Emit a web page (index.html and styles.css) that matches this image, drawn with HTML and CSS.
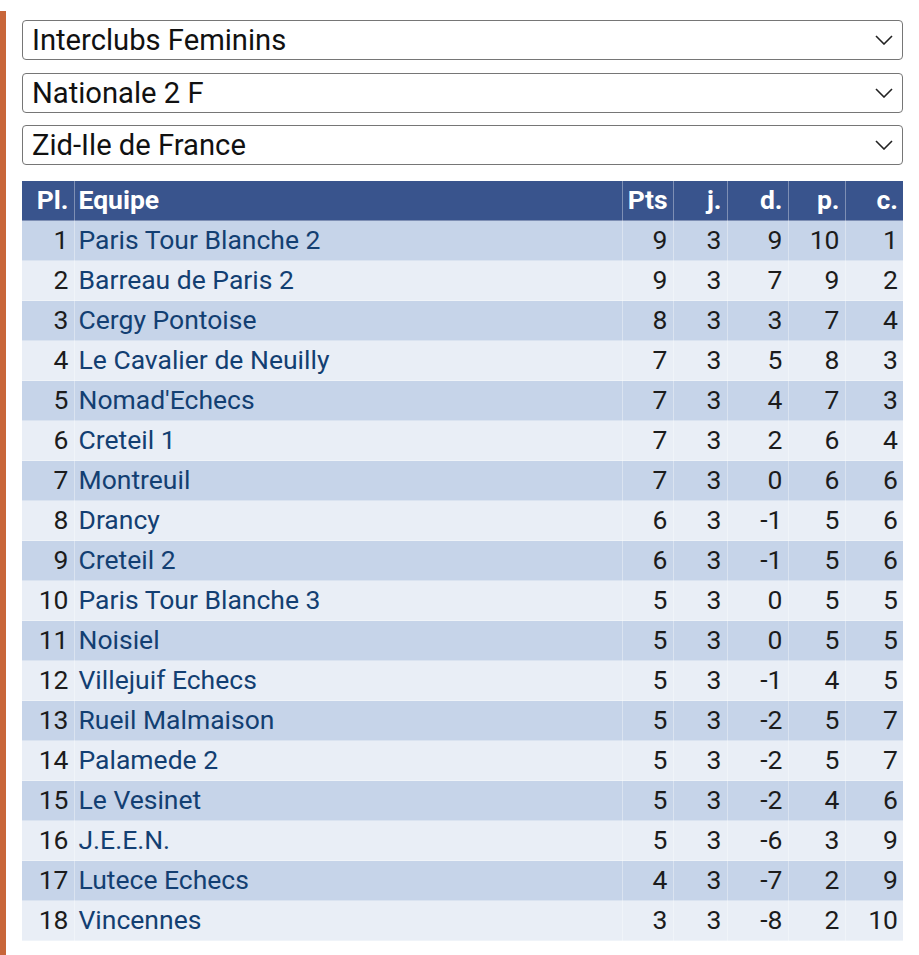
FILE: index.html
```html
<!DOCTYPE html>
<html lang="fr">
<head>
<meta charset="utf-8">
<title>Classement</title>
<link rel="stylesheet" href="styles.css">
</head>
<body>
<div class="page">
  <div class="selects">
    <div class="select-wrap">
      <select class="sel"><option>Interclubs Feminins</option></select>
      <svg class="chev" width="18" height="10" viewBox="0 0 18 10"><path d="M1 1 L9 9 L17 1" fill="none" stroke="#222" stroke-width="1.6"/></svg>
    </div>
    <div class="select-wrap">
      <select class="sel"><option>Nationale 2 F</option></select>
      <svg class="chev" width="18" height="10" viewBox="0 0 18 10"><path d="M1 1 L9 9 L17 1" fill="none" stroke="#222" stroke-width="1.6"/></svg>
    </div>
    <div class="select-wrap">
      <select class="sel"><option>Zid-Ile de France</option></select>
      <svg class="chev" width="18" height="10" viewBox="0 0 18 10"><path d="M1 1 L9 9 L17 1" fill="none" stroke="#222" stroke-width="1.6"/></svg>
    </div>
  </div>
  <table class="standings">
    <colgroup>
      <col class="c-pl"><col class="c-team"><col class="c-pts"><col class="c-j"><col class="c-d"><col class="c-p"><col class="c-c">
    </colgroup>
    <thead>
      <tr><th>Pl.</th><th class="left">Equipe</th><th>Pts</th><th>j.</th><th>d.</th><th>p.</th><th>c.</th></tr>
    </thead>
    <tbody>
      <tr><td>1</td><td class="team">Paris Tour Blanche 2</td><td>9</td><td>3</td><td>9</td><td>10</td><td>1</td></tr>
      <tr><td>2</td><td class="team">Barreau de Paris 2</td><td>9</td><td>3</td><td>7</td><td>9</td><td>2</td></tr>
      <tr><td>3</td><td class="team">Cergy Pontoise</td><td>8</td><td>3</td><td>3</td><td>7</td><td>4</td></tr>
      <tr><td>4</td><td class="team">Le Cavalier de Neuilly</td><td>7</td><td>3</td><td>5</td><td>8</td><td>3</td></tr>
      <tr><td>5</td><td class="team">Nomad'Echecs</td><td>7</td><td>3</td><td>4</td><td>7</td><td>3</td></tr>
      <tr><td>6</td><td class="team">Creteil 1</td><td>7</td><td>3</td><td>2</td><td>6</td><td>4</td></tr>
      <tr><td>7</td><td class="team">Montreuil</td><td>7</td><td>3</td><td>0</td><td>6</td><td>6</td></tr>
      <tr><td>8</td><td class="team">Drancy</td><td>6</td><td>3</td><td>-1</td><td>5</td><td>6</td></tr>
      <tr><td>9</td><td class="team">Creteil 2</td><td>6</td><td>3</td><td>-1</td><td>5</td><td>6</td></tr>
      <tr><td>10</td><td class="team">Paris Tour Blanche 3</td><td>5</td><td>3</td><td>0</td><td>5</td><td>5</td></tr>
      <tr><td>11</td><td class="team">Noisiel</td><td>5</td><td>3</td><td>0</td><td>5</td><td>5</td></tr>
      <tr><td>12</td><td class="team">Villejuif Echecs</td><td>5</td><td>3</td><td>-1</td><td>4</td><td>5</td></tr>
      <tr><td>13</td><td class="team">Rueil Malmaison</td><td>5</td><td>3</td><td>-2</td><td>5</td><td>7</td></tr>
      <tr><td>14</td><td class="team">Palamede 2</td><td>5</td><td>3</td><td>-2</td><td>5</td><td>7</td></tr>
      <tr><td>15</td><td class="team">Le Vesinet</td><td>5</td><td>3</td><td>-2</td><td>4</td><td>6</td></tr>
      <tr><td>16</td><td class="team">J.E.E.N.</td><td>5</td><td>3</td><td>-6</td><td>3</td><td>9</td></tr>
      <tr><td>17</td><td class="team">Lutece Echecs</td><td>4</td><td>3</td><td>-7</td><td>2</td><td>9</td></tr>
      <tr><td>18</td><td class="team">Vincennes</td><td>3</td><td>3</td><td>-8</td><td>2</td><td>10</td></tr>
    </tbody>
  </table>
</div>
</body>
</html>
```
FILE: styles.css
```css
html, body {
  margin: 0;
  padding: 0;
  background: #ffffff;
}
body {
  font-family: Roboto, "Liberation Sans", Arial, sans-serif;
  color: #222;
}
.page {
  margin-top: 11px;
  border-left: 6px solid #c8663a;
  padding: 9px 16px 0 16px;
  min-height: 944px;
  box-sizing: border-box;
}
.selects {
  display: flex;
  flex-direction: column;
  gap: 12.5px;
}
.select-wrap {
  position: relative;
}
.sel {
  display: block;
  width: 100%;
  height: 40px;
  box-sizing: border-box;
  -webkit-appearance: none;
  appearance: none;
  background: #fff;
  border: 1px solid #767676;
  border-radius: 4px;
  font-family: Roboto, "Liberation Sans", Arial, sans-serif;
  font-size: 29.2px;
  color: #111;
  padding: 0 40px 0 9px;
  margin: 0;
}
.chev {
  position: absolute;
  right: 10px;
  top: 15px;
  pointer-events: none;
}
.standings {
  margin-top: 15px;
  width: 881px;
  border-collapse: collapse;
  table-layout: fixed;
  font-size: 26.5px;
}
.c-pl { width: 52px; }
.c-team { width: 548px; }
.c-pts { width: 51px; }
.c-j { width: 54px; }
.c-d { width: 61px; }
.c-p { width: 57px; }
.c-c { width: 58px; }
.standings th,
.standings td {
  height: 40px;
  padding: 0 5px 0 4px;
  box-sizing: border-box;
  text-align: right;
  border: 1px solid rgba(255,255,255,0.35);
  white-space: nowrap;
  line-height: 1;
}
.standings th {
  background: #39548d;
  color: #fff;
  font-weight: 700;
}
.standings th.left {
  text-align: left;
}
.standings tbody tr:nth-child(odd) td {
  background: #c6d4e9;
}
.standings tbody tr:nth-child(even) td {
  background: #e9eef6;
}
.standings td {
  color: #1c1c1c;
}
.standings td.team {
  text-align: left;
  color: #133f72;
}
.standings th:first-child,
.standings td:first-child {
  border-left: none;
}
.standings th:last-child,
.standings td:last-child {
  border-right: none;
}
```
